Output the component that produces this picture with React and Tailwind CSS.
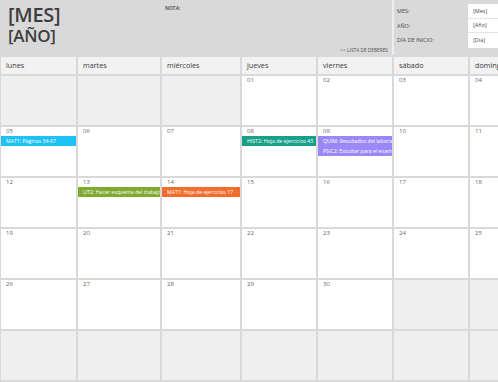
const days = ["lunes", "martes", "miércoles", "jueves", "viernes", "sábado", "domingo"];

const weeks = [
  [null, null, null, "01", "02", "03", "04"],
  ["05", "06", "07", "08", "09", "10", "11"],
  ["12", "13", "14", "15", "16", "17", "18"],
  ["19", "20", "21", "22", "23", "24", "25"],
  ["26", "27", "28", "29", "30", null, null],
  [null, null, null, null, null, null, null],
];

const events = {
  "05": [{ text: "MAT1: Páginas 34-67", color: "bg-[#1fc1f4]" }],
  "08": [{ text: "HIST2: Hoja de ejercicios 43", color: "bg-[#17a189]" }],
  "09": [
    { text: "QUÍM: Resultados del laboratorio", color: "bg-[#9b88f6]" },
    { text: "PSIC2: Estudiar para el examen", color: "bg-[#9b88f6]" },
  ],
  "13": [{ text: "LIT2: Hacer esquema del trabajo", color: "bg-[#7daa2f]" }],
  "14": [{ text: "MAT1: Hoja de ejercicios 17", color: "bg-[#f26c2c]" }],
};

function DayCell({ date }) {
  if (!date) return <div className="bg-[#efefef]" />;
  return (
    <div className="bg-white overflow-hidden">
      <div className="pl-[5px] text-[6px] leading-[8px] text-[#666666] antialiased">{date}</div>
      <div className="mt-[1px]">
        {(events[date] || []).map((ev) => (
          <div
            key={ev.text}
            className={`${ev.color} h-[10px] pl-[5px] text-[5.2px] leading-[10px] text-white whitespace-nowrap overflow-hidden`}
          >
            {ev.text}
          </div>
        ))}
      </div>
    </div>
  );
}

export default function App() {
  return (
    <div className="w-[498px] h-[382px] overflow-hidden bg-[#d9d9d9] font-['Open_Sans',sans-serif] antialiased">
      <div className="flex h-[55px] bg-[#d9d9d9]">
        <div className="flex w-[392px]">
          <div className="w-[157px] pl-[8px] pt-[3px] text-[#3d3d3d]">
            <div className="text-[20px] leading-[23px] font-semibold tracking-[-0.3px]">[MES]</div>
            <div className="text-[17px] leading-[20px] font-semibold tracking-[-0.3px]">[AÑO]</div>
          </div>
          <div className="flex-1 flex flex-col justify-between pl-[8px] pr-[4px] pt-[5px] pb-[1px]">
            <div className="text-[5px] font-semibold text-[#404040]">NOTA:</div>
            <div className="self-end text-[4.8px] text-[#505050]">&lt;&lt; LISTA DE DEBERES</div>
          </div>
        </div>
        <div className="w-[2px] bg-[#eeeeee]" />
        <div className="flex flex-1 pt-[4px]">
          <div className="w-[74px] pl-[3px] text-[5.5px] text-[#4a4a4a]">
            <div className="h-[15px] flex items-center">MES:</div>
            <div className="h-[14px] flex items-center">AÑO:</div>
            <div className="h-[15px] flex items-center">DÍA DE INICIO:</div>
          </div>
          <div className="flex-1 h-[44px] bg-white text-[5.5px] text-[#4a4a4a]">
            <div className="h-[15px] flex items-center pl-[5px] border-b border-[#e4e4e4]">[Mes]</div>
            <div className="h-[14px] flex items-center pl-[5px] border-b border-[#e4e4e4]">[Año]</div>
            <div className="h-[15px] flex items-center pl-[5px]">[Día]</div>
          </div>
        </div>
      </div>
      <div className="grid grid-cols-[75px_82px_78px_74px_74px_74px_74px] grid-rows-[17px_49px_49px_49px_49px_49px_49px] gap-[2px] pt-[2px] pl-[1px] bg-[#d9d9d9]">
        {days.map((d) => (
          <div key={d} className="bg-[#f2f2f2] flex items-center pl-[5px] text-[7.2px] font-medium text-[#3a3a3a] whitespace-nowrap overflow-hidden">
            {d}
          </div>
        ))}
        {weeks.map((week, wi) =>
          week.map((date, di) => <DayCell key={`${wi}-${di}`} date={date} />)
        )}
      </div>
    </div>
  );
}
